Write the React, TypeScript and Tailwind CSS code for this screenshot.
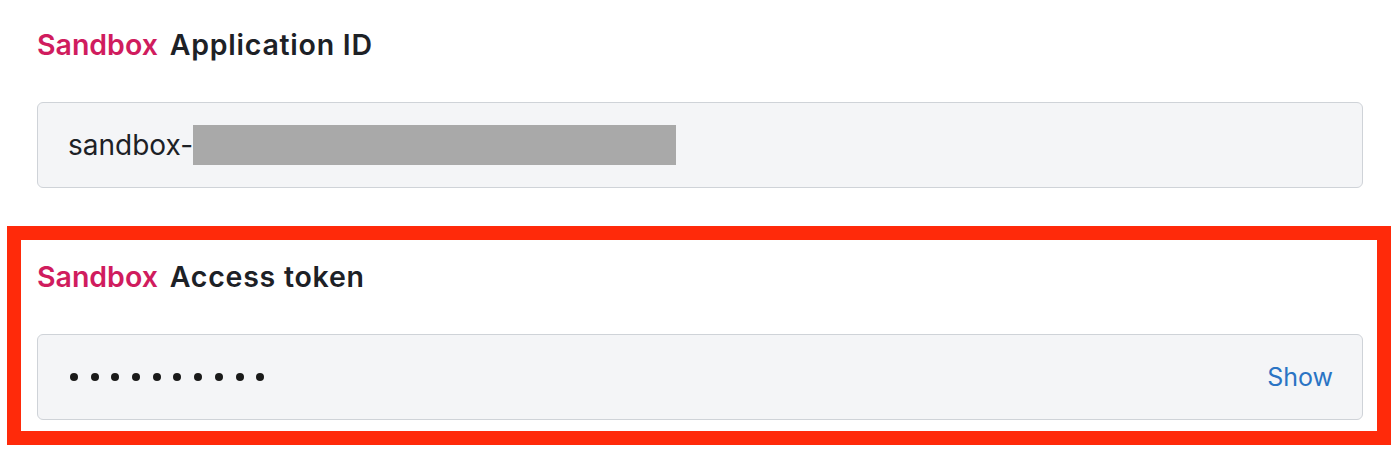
export default function App() {
  const font = { fontFamily: "Inter, 'Noto Sans', sans-serif" };
  return (
    <div className="w-[1400px] h-[451px] bg-white overflow-hidden" style={font}>
      <div className="pl-[37px]">
        <div className="h-[30px] mt-[30px] flex items-center text-[28.5px] font-semibold text-[#1d2126] leading-none whitespace-pre">
          <span className="text-[#d01c5e]">Sandbox</span>
          <span className="ml-[4px] tracking-[0.75px]"> Application ID</span>
        </div>
        <div className="mt-[42px] w-[1326px] h-[86px] rounded-[6px] border border-[#cfd3d8] bg-[#f4f5f7] flex items-center pl-[30px]">
          <span className="text-[28px] text-[#1d2126] leading-none">sandbox-</span>
          <div className="w-[483px] h-[40px] bg-[#a9a9a9]" />
        </div>
      </div>
      <div className="ml-[7px] mt-[38px] w-[1384px] border-[14px] border-[#ff2a0a] pl-[16px] pr-[14px] pt-[22px] pb-[11px]">
        <div className="h-[30px] flex items-center text-[28.5px] font-semibold text-[#1d2126] leading-none whitespace-pre">
          <span className="text-[#d01c5e]">Sandbox</span>
          <span className="ml-[4px] tracking-[0.75px]"> Access token</span>
        </div>
        <div className="mt-[42px] w-[1326px] h-[86px] rounded-[6px] border border-[#cfd3d8] bg-[#f4f5f7] flex items-center justify-between pl-[32px] pr-[29px]">
          <div className="flex items-center gap-[12.7px]" aria-label="masked token">
            {Array.from({ length: 10 }).map((_, i) => (
              <span key={i} className="block w-[8px] h-[8px] rounded-full bg-[#1a1a1a]" />
            ))}
          </div>
          <span className="text-[25px] text-[#2a74c4] leading-none">Show</span>
        </div>
      </div>
    </div>
  );
}
